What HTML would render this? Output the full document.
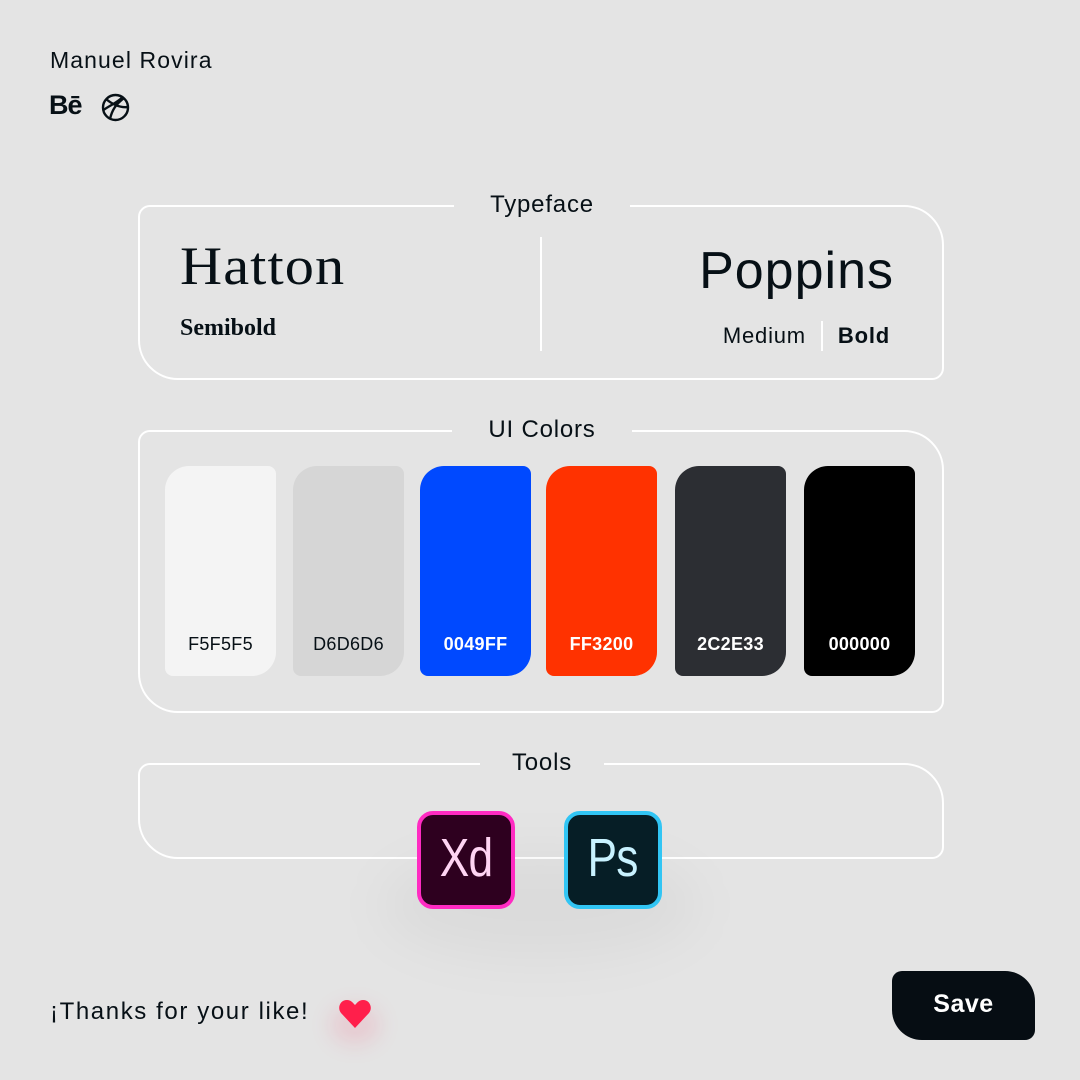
<!DOCTYPE html>
<html><head><meta charset="utf-8"><style>
*{margin:0;padding:0;box-sizing:border-box}
body{width:1080px;height:1080px;background:#e4e4e4;position:relative;overflow:hidden;font-family:"Liberation Sans",sans-serif;color:#071016}
.a{position:absolute}
.box{position:absolute;left:138px;width:806px;border:2px solid #fff;border-radius:12px 40px 12px 40px}
.ttl{position:absolute;background:#e4e4e4;font-size:24px;text-align:center;top:-17px;line-height:30px;letter-spacing:0.8px}
.sw{position:absolute;top:466px;width:111px;height:210px;border-radius:24px 8px 24px 8px;font-size:18px;text-align:center;padding-top:168px;letter-spacing:0.3px}
.ic{position:absolute;top:811px;width:98px;height:98px;border:4px solid;border-radius:16px;text-align:center;line-height:86px;overflow:hidden}
.ic span{display:inline-block;font-size:54px;transform:scaleX(0.82);letter-spacing:-1px}
</style></head><body>
<div class="a" style="left:50px;top:47px;font-size:23px;letter-spacing:1.1px">Manuel Rovira</div>
<div class="a" style="left:49px;top:90px;font-size:27px;font-weight:bold;letter-spacing:-1px">Bē</div>
<svg class="a" style="left:101px;top:93px" width="29" height="29" viewBox="0 0 29 29" fill="none" stroke="#071016" stroke-width="2.4"><circle cx="14.5" cy="14.5" r="12.5"/><path d="M5 6c6 5 14 9 22 8M2.5 17c7-5 15-8 19-13M9 26c2-9 6-15 14-21"/></svg>

<div class="box" style="top:205px;height:175px">
  <div class="ttl" style="left:314px;width:176px">Typeface</div>
  <div class="a" style="left:400px;top:30px;width:2px;height:114px;background:#fff"></div>
  <div class="a" style="left:40px;top:28px;font-family:'Liberation Serif',serif;font-size:54px;letter-spacing:1px;transform:scaleX(1.08);transform-origin:left">Hatton</div>
  <div class="a" style="left:40px;top:108px;font-family:'Liberation Serif',serif;font-size:24px;font-weight:bold">Semibold</div>
  <div class="a" style="right:48px;top:34px;font-size:52px;letter-spacing:1px">Poppins</div>
  <div class="a" style="right:52px;top:114px;font-size:22px;display:flex;align-items:center;letter-spacing:0.8px"><span>Medium</span><span style="display:inline-block;width:2px;height:30px;background:#fff;margin:0 15px"></span><b>Bold</b></div>
</div>

<div class="box" style="top:430px;height:283px">
  <div class="ttl" style="left:312px;width:180px">UI Colors</div>
</div>
<div class="sw" style="left:165px;background:#f4f4f4">F5F5F5</div>
<div class="sw" style="left:293px;background:#d6d6d6">D6D6D6</div>
<div class="sw" style="left:420px;background:#0049ff;color:#fff;font-weight:bold">0049FF</div>
<div class="sw" style="left:546px;background:#ff3200;color:#fff;font-weight:bold">FF3200</div>
<div class="sw" style="left:675px;background:#2c2e33;color:#fff;font-weight:bold">2C2E33</div>
<div class="sw" style="left:804px;background:#000;color:#fff;font-weight:bold">000000</div>

<div class="box" style="top:763px;height:96px">
  <div class="ttl" style="left:340px;width:124px">Tools</div>
</div>
<div class="a" style="left:380px;top:850px;width:320px;height:110px;border-radius:50%;background:rgba(0,0,0,0.035);filter:blur(25px)"></div>
<div class="ic" style="left:417px;border-color:#ff2bc2;background:#2e001f;color:#ffd4f3"><span>Xd</span></div>
<div class="ic" style="left:564px;border-color:#31c5f4;background:#061e26;color:#c8f2ff"><span>Ps</span></div>

<div class="a" style="left:50px;top:998px;font-size:24px;letter-spacing:1.6px">¡Thanks for your like!</div>
<div class="a" style="left:330px;top:1005px;width:50px;height:40px;border-radius:50%;background:rgba(255,30,80,0.12);filter:blur(10px)"></div>
<svg class="a" style="left:338px;top:999px" width="34" height="30" viewBox="0 0 34 30"><path d="M17 29L3 14C-1 9 2 1 9 1c4 0 6 3 8 5 2-2 4-5 8-5 7 0 10 8 6 13z" fill="#ff1f4b"/></svg>

<div class="a" style="left:892px;top:971px;width:143px;height:69px;background:#060d13;border-radius:10px 30px 10px 30px;color:#fff;font-size:25px;font-weight:bold;text-align:center;line-height:67px;letter-spacing:0.5px">Save</div>
</body></html>
